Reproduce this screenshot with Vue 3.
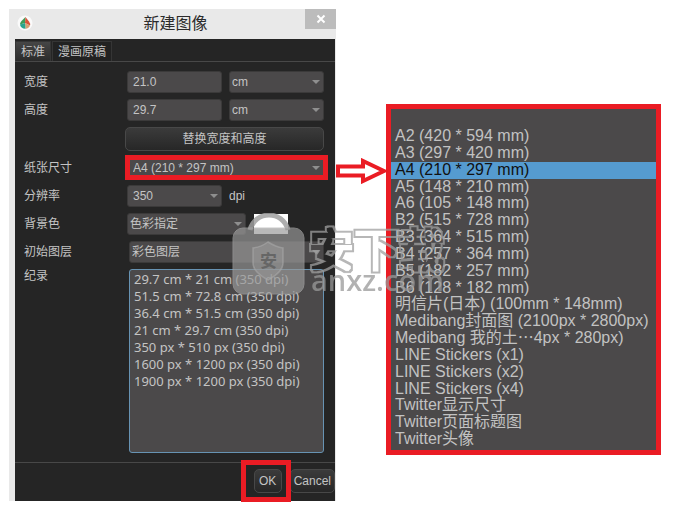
<script setup>
import { ref } from 'vue'

const width = ref('21.0')
const height = ref('29.7')
const records = [
  '29.7 cm * 21 cm (350 dpi)',
  '51.5 cm * 72.8 cm (350 dpi)',
  '36.4 cm * 51.5 cm (350 dpi)',
  '21 cm * 29.7 cm (350 dpi)',
  '350 px * 510 px (350 dpi)',
  '1600 px * 1200 px (350 dpi)',
  '1900 px * 1200 px (350 dpi)',
]
const selected = 'A4 (210 * 297 mm)'
const papers = [
  'A2 (420 * 594 mm)',
  'A3 (297 * 420 mm)',
  'A4 (210 * 297 mm)',
  'A5 (148 * 210 mm)',
  'A6 (105 * 148 mm)',
  'B2 (515 * 728 mm)',
  'B3 (364 * 515 mm)',
  'B4 (257 * 364 mm)',
  'B5 (182 * 257 mm)',
  'B6 (128 * 182 mm)',
  '明信片(日本) (100mm * 148mm)',
  'Medibang封面图 (2100px * 2800px)',
  'Medibang 我的土⋯4px * 280px)',
  'LINE Stickers (x1)',
  'LINE Stickers (x2)',
  'LINE Stickers (x4)',
  'Twitter显示尺寸',
  'Twitter页面标题图',
  'Twitter头像',
]
</script>

<template>
  <main class="stage">
    <section class="dialog" aria-labelledby="title">
      <header class="titlebar">
        <svg class="logo" viewBox="0 0 16 16" aria-hidden="true">
          <circle cx="8" cy="8" r="7.5" fill="#fafafa" />
          <path d="M8.500 2L4.500 6C3 8 3 9 3 9.500L8 8z" fill="#3f9d58" />
          <path d="M8.500 2l3.500 4.500q1.500 2 1 4L8 8z" fill="#d9553c" />
          <path d="M8 8l5 2.500q-1 3-4.500 3.300z" fill="#d6a274" />
          <path d="M8 8L3 9.500q.5 4 5.500 4.300z" fill="#27a58f" />
        </svg>
        <h1 id="title">新建图像</h1>
        <button class="close" type="button" aria-label="关闭">
          <svg viewBox="0 0 10 10" aria-hidden="true">
            <path d="M1.500 1.500l7 7M8.500 1.500l-7 7" stroke="#fff" stroke-width="2" />
          </svg>
        </button>
      </header>

      <form class="body" @submit.prevent>
        <nav class="tabs">
          <button type="button" class="tab active">标准</button>
          <button type="button" class="tab">漫画原稿</button>
        </nav>

        <div class="fields">
          <label for="w">宽度</label>
          <div class="pair">
            <input id="w" v-model="width" class="field" />
            <span class="drop"><select class="field unit" aria-label="宽度单位"><option>cm</option></select></span>
          </div>

          <label for="h">高度</label>
          <div class="pair">
            <input id="h" v-model="height" class="field" />
            <span class="drop"><select class="field unit" aria-label="高度单位"><option>cm</option></select></span>
          </div>

          <button type="button" class="push swap">替换宽度和高度</button>

          <label for="paper">纸张尺寸</label>
          <span class="drop marked">
            <select id="paper" class="field"><option>{{ selected }}</option></select>
          </span>

          <label for="res">分辨率</label>
          <div class="pair">
            <span class="drop"><select id="res" class="field"><option>350</option></select></span>
            <span>dpi</span>
          </div>

          <label for="bg">背景色</label>
          <div class="colour">
            <span class="drop"><select id="bg" class="field cjk"><option>色彩指定</option></select></span>
            <button type="button" class="swatch" aria-label="颜色"></button>
          </div>

          <label for="layer">初始图层</label>
          <span class="drop inset">
            <select id="layer" class="field cjk"><option>彩色图层</option></select>
          </span>

          <span id="rec" class="top">纪录</span>
          <ul class="records inset" role="listbox" aria-labelledby="rec">
            <li v-for="r in records" :key="r" role="option">{{ r }}</li>
          </ul>
        </div>

        <footer class="actions">
          <span class="ok"><button type="submit" class="push">OK</button></span>
          <button type="button" class="push cancel">Cancel</button>
        </footer>
      </form>
    </section>

    <svg class="arrow" viewBox="0 0 52 26" aria-hidden="true">
      <path d="M2 8.500H27V3L48 13L27 23V17.500H2z" fill="#fff" stroke="#ea1c24" stroke-width="4" />
    </svg>

    <ul class="papers" role="listbox" aria-label="纸张尺寸">
      <li v-for="p in papers" :key="p" role="option" :class="{ on: p === selected }" :aria-selected="p === selected">{{ p }}</li>
    </ul>

    <svg class="watermark" viewBox="0 0 220 92" aria-hidden="true">
      <defs>
        <filter id="hollow" x="-5%" y="-10%" width="110%" height="120%">
          <feMorphology in="SourceAlpha" operator="dilate" radius="1" result="inner" />
          <feMorphology in="SourceGraphic" operator="dilate" radius="3" result="outer" />
          <feComposite in="outer" in2="inner" operator="out" />
        </filter>
      </defs>
      <path d="M18 17C23 -3 51 -3 56 17" fill="none" stroke="#a0a0a0" stroke-width="5" opacity=".85" />
      <rect x="1" y="15" width="71" height="66" rx="10" fill="#999" stroke="#aaa" opacity=".68" />
      <path d="M36 29q8 5 15 6v15q0 9-15 17q-15-8-15-17V35q8-1 15-6z" fill="#999" fill-opacity=".5" stroke="#a8a8a8" stroke-opacity=".6" stroke-width="1.500" />
      <text class="seal" x="28" y="54">安</text>
      <text class="brand" x="77" y="54" filter="url(#hollow)">安下载</text>
      <text class="site" x="79" y="78">anxz.com</text>
    </svg>
  </main>
</template>

<style>
body {
  background: #fff;
}
</style>

<style scoped>
.stage {
  position: relative;
  display: grid;
  grid-template-columns: minmax(0, 327fr) minmax(0, 50fr) minmax(0, 275fr);
  align-items: start;
  padding: 9px 21px 9px 9px;
  font: 12px/16px "Liberation Sans", "Noto Sans CJK SC", sans-serif;
  color: #c4c4c4;
}
* {
  box-sizing: border-box;
}
ul,
h1 {
  margin: 0;
  padding: 0;
  list-style: none;
}
button,
input,
select {
  margin: 0;
  font: inherit;
  color: inherit;
}
.dialog {
  background: #e9e9e9;
  padding: 0 1px 0 6px;
}
.titlebar {
  display: grid;
  grid-template-columns: 31px 1fr 31px;
  height: 30px;
  margin-right: -1px;
}
.logo {
  width: 16px;
  height: 16px;
  margin-top: 6px;
  margin-left: 2px;
}
h1 {
  font-size: 16px;
  font-weight: 400;
  line-height: 30px;
  text-align: center;
  color: #2b2b2b;
}
.close {
  display: grid;
  place-items: center;
  height: 20px;
  padding: 0;
  border: 0;
  background: #bcbcbc;
}
.close svg {
  width: 10px;
  height: 10px;
}
.body {
  background: #252525;
  padding-top: 2px;
}
.tabs {
  display: flex;
  gap: 1px;
  height: 21px;
  border-bottom: 1px solid #484848;
}
.tab {
  padding: 0 5px;
  border: 1px solid #353535;
  border-bottom: 0;
  background: #222;
}
.tab.active {
  background: linear-gradient(#464646, #2b2b2b);
}
.fields {
  display: grid;
  grid-template-columns: 103px 1fr;
  grid-template-rows: 22px 22px 24px 22px 22px 22px 22px auto;
  row-gap: 6px;
  align-items: center;
  padding: 9px 11px 9px 9px;
}
.top {
  align-self: start;
  line-height: 14px;
}
.pair {
  display: grid;
  grid-template-columns: 1fr 1fr;
  gap: 7px;
  align-items: center;
}
.colour {
  display: grid;
  grid-template-columns: 119px 34px;
  gap: 8px;
  align-items: center;
}
.swatch {
  height: 20px;
  padding: 0;
  border: 0;
  background: #fff;
}
.field {
  display: block;
  width: 100%;
  min-width: 0;
  height: 22px;
  padding: 0 5px;
  border: 1px solid #3b3a3a;
  border-radius: 3px;
  outline: 0;
  background: #4b494a;
  appearance: none;
}
.unit,
.cjk {
  padding: 0 2px;
}
.drop {
  position: relative;
  display: block;
}
.drop::after {
  content: "";
  position: absolute;
  right: 4px;
  top: 9px;
  border: 4px solid transparent;
  border-top-color: #8f8f8f;
  border-bottom: 0;
  pointer-events: none;
}
.marked::before {
  content: "";
  position: absolute;
  inset: -2px -4px -1px -2px;
  border: 5px solid #ea1c24;
  pointer-events: none;
}
.inset {
  margin-left: 2px;
}
.push {
  height: 24px;
  padding: 0 3px;
  border: 1px solid #484848;
  border-radius: 5px;
  background: linear-gradient(#3b3b3b, #272727);
}
.swap {
  grid-column: 2;
  margin-left: -2px;
}
.records {
  min-height: 184px;
  padding: 1px 4px;
  border: 1px solid #6793b3;
  border-radius: 3px;
  background: #4b494a;
  font: 13px/17px "Noto Sans", sans-serif;
  white-space: nowrap;
}
.actions {
  display: flex;
  justify-content: flex-end;
  gap: 8px;
  padding: 6px 0 8px;
  border-top: 1px solid #484848;
}
.ok {
  position: relative;
}
.ok .push {
  width: 28px;
}
.ok::after {
  content: "";
  position: absolute;
  inset: -9px -9px -9px -13px;
  border: 5px solid #ea1c24;
  pointer-events: none;
}
.arrow {
  position: relative;
  width: 52px;
  height: 26px;
  margin-top: 149px;
}
.papers {
  display: grid;
  grid-auto-rows: 1fr;
  min-height: 351px;
  margin-top: 95px;
  padding: 19px 0 2px;
  border: 5px solid #ea1c24;
  background: #4b494a;
  font-size: 16px;
  color: #c2c2c2;
  white-space: nowrap;
}
.papers li {
  padding-left: 4px;
}
.papers .on {
  background: #559bd0;
  color: #111;
}
.watermark {
  position: absolute;
  left: 232px;
  top: 213px;
  width: 220px;
  height: 92px;
  pointer-events: none;
}
.watermark text {
  font-family: "Liberation Sans", "Noto Sans CJK SC", sans-serif;
  font-weight: 700;
}
.seal {
  font-size: 17px;
  fill: #666;
}
.watermark .brand {
  font-size: 45px;
  font-weight: 400;
  fill: #a0a0a0;
  opacity: 0.75;
}
.watermark .site {
  font-family: "Open Sans", sans-serif;
  font-size: 29px;
  font-weight: 600;
  fill: #999;
  opacity: 0.75;
}
</style>
